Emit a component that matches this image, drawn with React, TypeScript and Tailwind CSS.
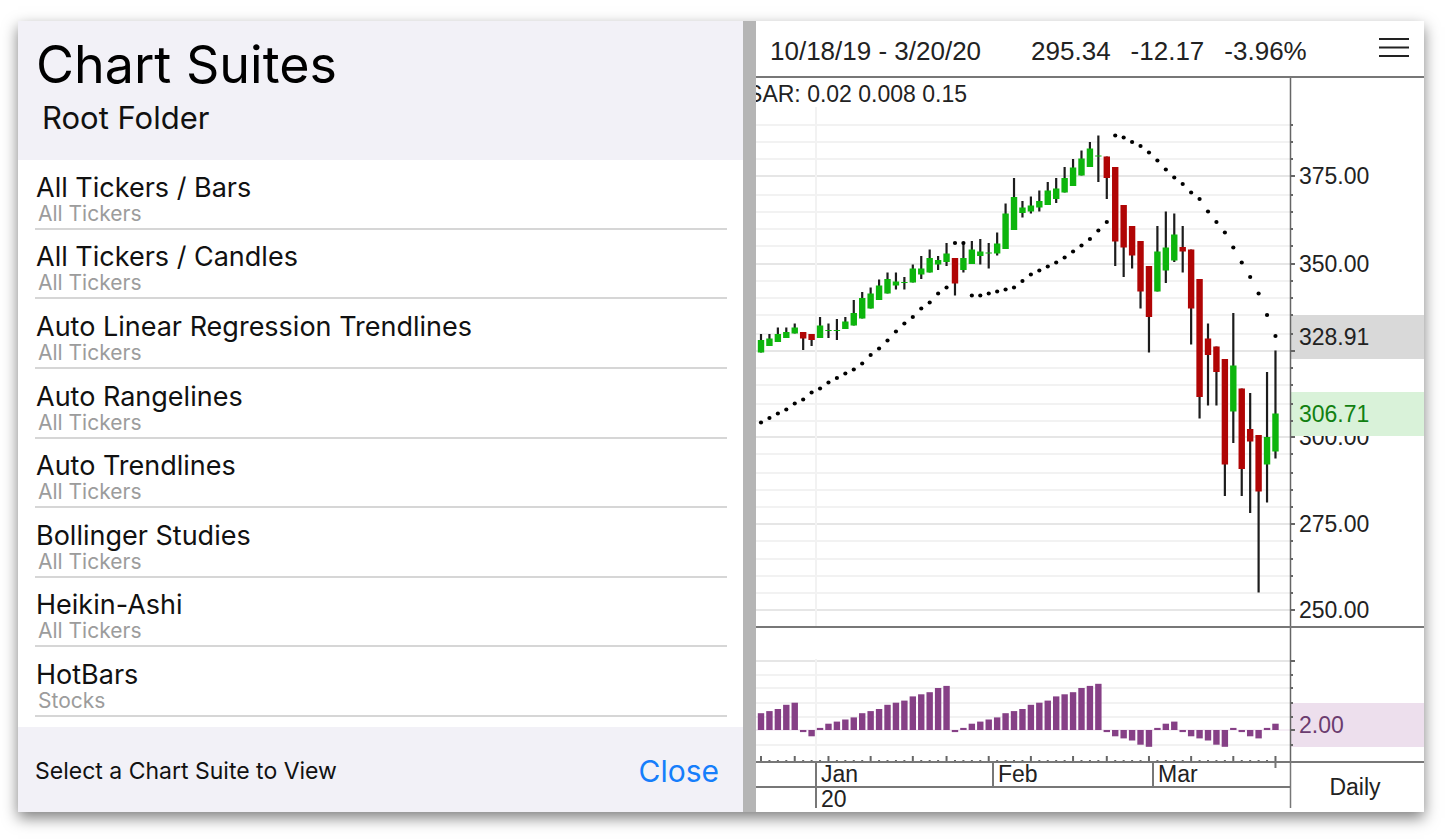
import React from 'react';

type Candle = {
  // y positions on the price pane
  high: number;
  top: number;
  bottom: number;
  low: number;
  up: boolean;
};

const up = (high: number, top: number, bottom: number, low: number = bottom): Candle => ({ high, top, bottom, low, up: true });
const down = (high: number, top: number, bottom: number, low: number = bottom): Candle => ({ high, top, bottom, low, up: false });

const suites = [
  { name: 'All Tickers / Bars', group: 'All Tickers' },
  { name: 'All Tickers / Candles', group: 'All Tickers' },
  { name: 'Auto Linear Regression Trendlines', group: 'All Tickers' },
  { name: 'Auto Rangelines', group: 'All Tickers' },
  { name: 'Auto Trendlines', group: 'All Tickers' },
  { name: 'Bollinger Studies', group: 'All Tickers' },
  { name: 'Heikin-Ashi', group: 'All Tickers' },
  { name: 'HotBars', group: 'Stocks' },
];

const candles: Candle[] = [
  up(334, 340, 352.5), up(334, 338.5, 346), up(327.5, 334, 342), up(327.5, 332, 338),
  up(323.5, 327.5, 333.5), down(332, 332, 338.5, 350), down(334, 334, 340, 346), up(317, 325.5, 338),
  up(323.5, 330, 331, 338), up(319, 330, 331, 340), up(317, 321.5, 329), up(300, 313, 325.5),
  up(292, 298, 318.5), up(287.5, 293.5, 308.5), up(279.5, 285.5, 300), up(272.5, 279, 293.5),
  up(272.5, 281.5, 285.5, 289.5), up(277, 282, 283, 289.5), up(264.5, 268.5, 282.5), up(256, 268.5, 274.5, 279),
  up(249.5, 258, 272.5), up(256, 260, 264.5, 270), up(243, 253.5, 262, 266), down(258, 258, 283.5, 295.5),
  up(243, 258, 270, 272.5), up(241, 249.5, 264), up(239, 251.5, 256, 264.5), up(243, 252.5, 253.5, 268.5),
  up(232.5, 243.5, 253.5, 255.5), up(203.5, 213.5, 249), up(178, 197, 230), up(201, 207.5, 213, 217.5),
  up(196.5, 205.5, 211.5, 213.5), up(190.5, 201, 207.5, 211.5), up(182, 190.5, 205), up(178, 188.5, 199, 203),
  up(167, 178, 192.5), up(159, 167.5, 186), up(150.5, 158.5, 175.5), up(142, 148.5, 167),
  up(135.5, 155.5, 156.5, 182), down(156.5, 156.5, 178, 199), down(167, 167, 241.5, 266), down(205, 205, 247.5, 277),
  down(226, 226, 255.5, 268.5), down(241, 241, 291.5, 308.5), down(266, 266, 317, 352.5), up(226, 251.5, 291.5),
  up(211.5, 247.5, 270.5, 283), up(213.5, 234.5, 260.5, 262), down(226, 247, 251.5, 272.5), down(249.5, 249.5, 308.5, 344.5),
  down(279, 279, 397, 418.5), down(323.5, 338.5, 355, 405.5), down(346.5, 346.5, 372, 405.5), down(359, 359, 464.5, 496),
  up(313, 365.5, 411.5, 443), down(388.5, 388.5, 469, 496), down(393, 429, 441.5, 513), down(435, 435, 491.5, 592.5),
  up(372, 437, 464.5, 502.5), up(350.5, 413.5, 451.5, 458.5),
];

const sar = [
  422.5, 418, 413.5, 409.5, 403.5, 399.5, 392.5, 388.5, 382.5, 378, 373.5, 369.5, 363.5, 355, 348.5, 340.5,
  331.5, 323.5, 317, 308.5, 302.5, 293.5, 287.5, 243, 243, 295.5, 295.5, 293.5, 291.5, 289.5, 287.5, 281,
  274.5, 270.5, 266.5, 262.5, 257.5, 251.5, 245.5, 239, 230.5, 222, 135.5, 137.5, 142, 146, 152.5, 160.5,
  169.5, 177.5, 184, 192.5, 199, 211.5, 222, 232.5, 247.5, 262.5, 277, 293.5, 315, 336,
];

const streak = [
  8, 9, 10, 12, 13, -1, -3, 1, 3, 4, 5, 6, 8, 9, 10, 12, 13, 14, 16, 17, 18, 20, 21,
  -1, 1, 3, 4, 5, 6, 8, 9, 10, 12, 13, 14, 16, 17, 18, 20, 21, 22,
  -1, -3, -4, -5, -7, -8, 1, 3, 4, -1, -3, -4, -5, -7, -8, 1, -1, -3, -4, 1, 3,
];

const priceMajor = [
  { y: 176, label: '375.00' },
  { y: 264, label: '350.00' },
  { y: 351, label: '' },
  { y: 437, label: '300.00' },
  { y: 524, label: '275.00' },
  { y: 610, label: '250.00' },
];
const priceMinor = [125, 142, 159, 195, 212, 229, 246, 281, 298, 315, 334, 368, 385, 404, 421, 454, 473, 490, 507, 541, 559, 576, 593];

const streakMajor = [661, 730];
const streakMinor = [675, 688, 703, 717, 745];

const weekStarts = [0, 4, 8, 13, 18, 22, 27, 32, 37, 41, 46, 51, 56, 61];
const months = [
  { x: 60, label: 'Jan' },
  { x: 237, label: 'Feb' },
  { x: 397, label: 'Mar' },
];

const AXIS_X = 534;
const ZERO_Y = 730;
const barX = (i: number) => 5 + i * 8.434;

const paneText = 'font-[Liberation_Sans,Arial,sans-serif] text-[23px]';

function Ticks({ major, minor }: { major: number[]; minor: number[] }) {
  return (
    <g stroke="#666">
      {major.map((y) => (
        <line key={y} x1={AXIS_X} x2={AXIS_X + 5} y1={y} y2={y} strokeWidth={2} />
      ))}
      {minor.map((y) => (
        <line key={y} x1={AXIS_X} x2={AXIS_X + 3} y1={y} y2={y} strokeWidth={2} />
      ))}
    </g>
  );
}

function PricePane() {
  return (
    <svg viewBox="0 78 668 550" preserveAspectRatio="xMaxYMin meet" className="block h-[550px] w-full" role="img" aria-label="Price chart">
      <g strokeWidth={2}>
        {priceMinor.map((y) => (
          <line key={y} x1={0} x2={AXIS_X} y1={y} y2={y} stroke="#f2f2f2" />
        ))}
        {priceMajor.map(({ y }) => (
          <line key={y} x1={0} x2={AXIS_X} y1={y} y2={y} stroke="#e6e6e6" />
        ))}
        <line x1={60} x2={60} y1={107} y2={626} stroke="#f2f2f2" />
      </g>

      <text x={211} y={102} textAnchor="end" fill="#222" className={paneText}>
        SAR: 0.02 0.008 0.15
      </text>

      {candles.map((c, i) => (
        <g key={i}>
          <line x1={barX(i)} x2={barX(i)} y1={c.high} y2={c.low} stroke="#1c1c1c" strokeWidth={2.2} />
          <rect x={barX(i) - 3.2} y={c.top} width={6.4} height={c.bottom - c.top} fill={c.up ? '#0db50d' : '#b00505'} />
        </g>
      ))}
      {sar.map((y, i) => (
        <circle key={i} cx={barX(i)} cy={y} r={2.1} fill="#000" />
      ))}

      {/* Price axis */}
      {priceMajor.map(({ y, label }) => (
        <text key={y} x={543} y={y + 8} fill="#222" className={paneText}>
          {label}
        </text>
      ))}
      <rect x={AXIS_X} y={315} width={134} height={44} fill="#d9d9d9" />
      <text x={543} y={345} fill="#222" className={paneText}>328.91</text>
      <rect x={AXIS_X} y={392} width={134} height={44} fill="#d9f2d9" />
      <text x={543} y={422} fill="#118011" className={paneText}>306.71</text>

      <Ticks major={priceMajor.map((p) => p.y)} minor={priceMinor} />
      <line x1={AXIS_X + 0.5} x2={AXIS_X + 0.5} y1={78} y2={628} stroke="#666" strokeWidth={1.5} />
      <line x1={0} x2={668} y1={627} y2={627} stroke="#777" strokeWidth={2} />
    </svg>
  );
}

function StreakPane() {
  return (
    <svg viewBox="0 628 668 133" preserveAspectRatio="xMaxYMin meet" className="block h-[133px] w-full" role="img" aria-label="SAR streak">
      <g strokeWidth={2} stroke="#f2f2f2">
        {streakMinor.map((y) => (
          <line key={y} x1={0} x2={AXIS_X} y1={y} y2={y} />
        ))}
        <line x1={0} x2={AXIS_X} y1={661} y2={661} stroke="#e6e6e6" />
        <line x1={60} x2={60} y1={659} y2={761} />
      </g>
      <line x1={0} x2={AXIS_X} y1={ZERO_Y} y2={ZERO_Y} stroke="#ecdcec" />

      {streak.map((n, i) => (
        <rect
          key={i}
          x={barX(i) - 3.2}
          y={n > 0 ? ZERO_Y - n * 2.1 : ZERO_Y}
          width={6.4}
          height={Math.abs(n) * 2.1}
          fill="#864086"
        />
      ))}

      <rect x={AXIS_X} y={703} width={134} height={44} fill="#eddfed" />
      <text x={543} y={733} fill="#6b3c6f" className={paneText}>2.00</text>
      <Ticks major={streakMajor} minor={streakMinor} />

      <g stroke="#666" strokeWidth={2}>
        {candles.map((_, i) => (
          <line key={i} x1={barX(i)} x2={barX(i)} y1={weekStarts.includes(i) ? 756 : 760} y2={762} />
        ))}
      </g>
      <line x1={AXIS_X + 0.5} x2={AXIS_X + 0.5} y1={628} y2={761} stroke="#666" strokeWidth={1.5} />
    </svg>
  );
}

function TimeAxis() {
  return (
    <svg viewBox="0 761 668 51" preserveAspectRatio="xMaxYMin meet" className="block h-[51px] w-full" role="img" aria-label="Time axis">
      <g stroke="#777" strokeWidth={2}>
        <line x1={0} x2={668} y1={762} y2={762} />
        <line x1={0} x2={AXIS_X} y1={787} y2={787} />
        <line x1={60} x2={60} y1={762} y2={808} />
        <line x1={237} x2={237} y1={762} y2={787} />
        <line x1={397} x2={397} y1={762} y2={787} />
        <line x1={barX(61)} x2={barX(61)} y1={762} y2={768} />
        <line x1={AXIS_X + 0.5} x2={AXIS_X + 0.5} y1={761} y2={808} strokeWidth={1.5} />
      </g>
      {months.map((m) => (
        <text key={m.label} x={m.x + 5} y={782} fill="#222" className={paneText}>
          {m.label}
        </text>
      ))}
      <text x={65} y={807} fill="#222" className={paneText}>20</text>
      <text x={599} y={795} textAnchor="middle" fill="#222" className={paneText}>Daily</text>
    </svg>
  );
}

export default function App() {
  return (
    <div className="min-h-screen bg-white pt-[21px] pr-[26px] pb-[28px] pl-[18px]">
      <main className="flex bg-white shadow-[0_6px_14px_rgba(0,0,0,0.5)]">
        {/* Suite picker */}
        <section className="flex min-w-0 flex-[725] flex-col font-[Inter,sans-serif] text-[#111]">
          <header className="h-[139px] bg-[#f2f1f7] px-[18px] pt-[12px]">
            <h1 className="text-[52px] leading-[64px] text-black">Chart Suites</h1>
            <h2 className="pl-[6px] text-[31px] leading-[42px]">Root Folder</h2>
          </header>

          <ul className="flex flex-1 flex-col pr-[16px] pb-[10px] pl-[17px]">
            {suites.map((suite) => (
              <li key={suite.name} className="flex flex-1 border-b-2 border-[#d6d6d6]">
                <button type="button" className="flex flex-1 flex-col items-start justify-end pb-[2px] pl-px text-left">
                  <span className="text-[27px] leading-[28px]">{suite.name}</span>
                  <span className="pl-[2px] text-[21px] leading-[24px] text-[#9c9c9c]">{suite.group}</span>
                </button>
              </li>
            ))}
          </ul>

          <footer className="flex h-[85px] items-center justify-between bg-[#f2f1f7] pt-[3px] pr-[24px] pl-[17px]">
            <p className="text-[23px]">Select a Chart Suite to View</p>
            <button type="button" className="text-[30px] text-[#167efb]">Close</button>
          </footer>
        </section>

        <div className="w-[13px] shrink-0 bg-[#b5b5b5]" />

        {/* Chart */}
        <section className="min-w-0 flex-[668] font-[Liberation_Sans,Arial,sans-serif] text-[#222]">
          <header className="flex h-[57px] items-center justify-between border-b-2 border-[#777] px-[14px]">
            <div className="flex pt-[6px] text-[26px] whitespace-nowrap">
              <span className="mr-[50px]">10/18/19 - 3/20/20</span>
              <span className="mr-[20px]">295.34</span>
              <span className="mr-[20px]">-12.17</span>
              <span>-3.96%</span>
            </div>
            <button type="button" aria-label="Menu">
              <svg width="32" height="24" viewBox="0 0 32 24" stroke="#222" strokeWidth="2">
                <path d="M1 2H31M1 10.5H31M1 19H31" />
              </svg>
            </button>
          </header>
          <PricePane />
          <StreakPane />
          <TimeAxis />
        </section>
      </main>
    </div>
  );
}
